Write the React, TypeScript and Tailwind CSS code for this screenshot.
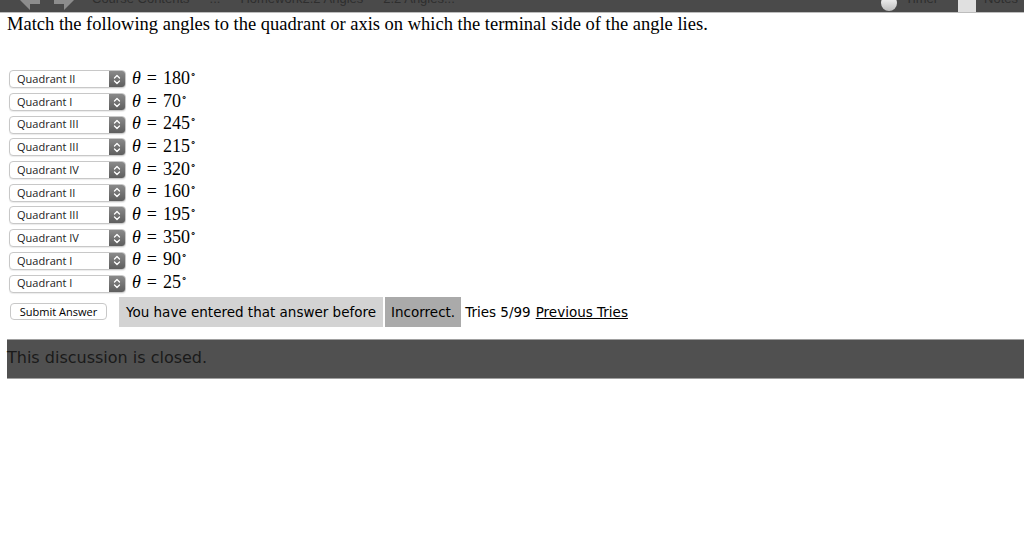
import React from "react";

const rows: [string, string][] = [
  ["Quadrant II", "180"],
  ["Quadrant I", "70"],
  ["Quadrant III", "245"],
  ["Quadrant III", "215"],
  ["Quadrant IV", "320"],
  ["Quadrant II", "160"],
  ["Quadrant III", "195"],
  ["Quadrant IV", "350"],
  ["Quadrant I", "90"],
  ["Quadrant I", "25"],
];

function Select({ label }: { label: string }) {
  return (
    <div className="flex h-[18px] w-[117px] items-stretch rounded-[4px] border border-[#c8c8c8] bg-white shadow-[0_1px_1px_rgba(0,0,0,0.08)]">
      <div className="flex flex-1 items-center pl-[7px] text-[11px] text-[#222] [font-family:'Open_Sans','DejaVu_Sans',sans-serif]">
        {label}
      </div>
      <div className="flex w-[16px] items-center justify-center rounded-r-[3px] bg-gradient-to-b from-[#8a8a8a] to-[#5e5e5e]">
        <svg width="8" height="11" viewBox="0 0 8 11" fill="none" stroke="white" strokeWidth="1.3" strokeLinecap="round" strokeLinejoin="round">
          <path d="M1.5 4 L4 1.5 L6.5 4" />
          <path d="M1.5 7 L4 9.5 L6.5 7" />
        </svg>
      </div>
    </div>
  );
}

export default function App() {
  return (
    <div className="min-h-[557px] w-[1024px] bg-white">
      {/* top bar (mostly cut off) */}
      <div className="relative flex h-[13px] items-start overflow-hidden border-b border-[#bdbdbd] bg-[#4a4a4a] text-[13px] leading-[13px] text-[#2e2e2e] [font-family:'Liberation_Sans',sans-serif]">
        <div className="flex h-[13px] items-start gap-[14px] pl-[20px]">
          <svg width="20" height="13" viewBox="0 0 20 13"><path d="M0 0 L10 10 L10 4 L20 4 L20 -8 L0 -8 Z" fill="#8d8d8d" /></svg>
          <svg width="20" height="13" viewBox="0 0 20 13"><path d="M20 0 L10 10 L10 4 L0 4 L0 -8 L20 -8 Z" fill="#8d8d8d" /></svg>
        </div>
        <div className="ml-[18px] flex -translate-y-[8px] gap-[20px]">
          <span>Course Contents</span>
          <span>...</span>
          <span>Homework2.2 Angles</span>
          <span>2.2 Angles...</span>
        </div>
        <div className="ml-auto flex items-start gap-[8px] pr-[6px]">
          <div className="-mt-[5px] h-[16px] w-[16px] rounded-full bg-gradient-to-b from-white to-[#bdbdbd]" />
          <span className="-translate-y-[8px]">Timer</span>
          <div className="-mt-[4px] ml-[12px] h-[16px] w-[18px] bg-[#e0e0e0]" />
          <span className="-translate-y-[8px]">Notes</span>
        </div>
      </div>

      <div className="pl-[7px] pt-[1px] text-[18.5px] leading-[20px] text-black [font-family:'Liberation_Serif',serif]">
        Match the following angles to the quadrant or axis on which the terminal side of the angle lies.
      </div>

      <div className="mt-[34px] flex flex-col pl-[9px]">
        {rows.map(([q, a], i) => (
          <div key={i} className="flex h-[22.7px] items-center gap-[6px]">
            <Select label={q} />
            <div className="flex items-baseline text-[18px] leading-[20px] text-black [font-family:'Liberation_Serif',serif]">
              <span className="italic">θ</span>
              <span className="mx-[6px]">=</span>
              <span>{a}</span>
              <span className="relative -top-[7px] text-[10px]">∘</span>
            </div>
          </div>
        ))}
      </div>

      <div className="mt-[2px] flex h-[30px] items-center pl-[10px] text-[13.5px] text-black [font-family:'DejaVu_Sans',sans-serif]">
        <div className="flex h-[17px] w-[97px] items-center justify-center rounded-[4px] border border-[#c8c8c8] bg-white text-[11px] [font-family:'Open_Sans','DejaVu_Sans',sans-serif]">
          Submit Answer
        </div>
        <div className="ml-[12px] flex h-[30px] items-center bg-[#d3d3d3] px-[7px]">You have entered that answer before</div>
        <div className="ml-[2px] flex h-[30px] items-center bg-[#aaaaaa] px-[6px]">Incorrect.</div>
        <div className="ml-[4px] flex gap-[5px]">
          <span>Tries 5/99</span>
          <span className="underline">Previous Tries</span>
        </div>
      </div>

      <div className="ml-[7px] mt-[12px] flex h-[40px] items-center border-y border-[#a0a0a0] bg-[#505050] pb-[2px] text-[16px] text-[#1a1a1a] [font-family:'DejaVu_Sans',sans-serif]">
        This discussion is closed.
      </div>
    </div>
  );
}
